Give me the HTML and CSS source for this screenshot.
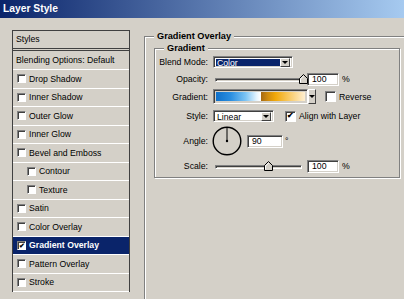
FILE: index.html
```html
<!DOCTYPE html>
<html lang="en">
<head>
    <meta charset="UTF-8">
    <meta name="viewport" content="width=device-width, initial-scale=1.0">
    <title>Layer Style</title>
    <link rel="stylesheet" href="styles.css">
</head>
<body>
    <div class="titlebar">Layer Style</div>

    <div class="main">
        <div class="style-list">
            <div class="list-head">Styles</div>
            <div class="list-row plain">Blending Options: Default</div>
            <div class="list-row"><span class="check"></span>Drop Shadow</div>
            <div class="list-row"><span class="check"></span>Inner Shadow</div>
            <div class="list-row"><span class="check"></span>Outer Glow</div>
            <div class="list-row"><span class="check"></span>Inner Glow</div>
            <div class="list-row"><span class="check"></span>Bevel and Emboss</div>
            <div class="list-row sub"><span class="check"></span>Contour</div>
            <div class="list-row sub"><span class="check"></span>Texture</div>
            <div class="list-row"><span class="check"></span>Satin</div>
            <div class="list-row"><span class="check"></span>Color Overlay</div>
            <div class="list-row active"><span class="check on">&#10004;</span>Gradient Overlay</div>
            <div class="list-row"><span class="check"></span>Pattern Overlay</div>
            <div class="list-row"><span class="check"></span>Stroke</div>
        </div>

        <fieldset class="group outer">
            <legend>Gradient Overlay</legend>
            <fieldset class="group inner">
                <legend>Gradient</legend>
                <div class="form">
                    <label>Blend Mode:</label>
                    <div class="ctl">
                        <div class="select blend"><span class="sel-text hl">Color</span><span class="drop"></span></div>
                    </div>

                    <label>Opacity:</label>
                    <div class="ctl">
                        <div class="slider">
                            <span class="track"></span>
                            <svg class="thumb" style="left: 86px" width="9" height="10" viewBox="0 0 9 10">
                                <polygon points="0.5,9.5 0.5,4.5 4.5,0.5 8.5,4.5 8.5,9.5" fill="#d4d0c8" stroke="#000"/>
                                <polyline points="1.5,8.5 1.5,5 4.5,2" fill="none" stroke="#fff"/>
                            </svg>
                        </div>
                        <span class="field">100</span><span class="unit">%</span>
                    </div>

                    <label>Gradient:</label>
                    <div class="ctl">
                        <div class="grad-pick"><span class="grad-bar"></span><span class="drop tall"></span></div>
                        <span class="check big"></span><span class="opt">Reverse</span>
                    </div>

                    <label>Style:</label>
                    <div class="ctl">
                        <div class="select style"><span class="sel-text">Linear</span><span class="drop"></span></div>
                        <span class="check big on">&#10004;</span><span class="opt">Align with Layer</span>
                    </div>

                    <label>Angle:</label>
                    <div class="ctl">
                        <svg class="dial" width="30" height="30" viewBox="0 0 30 30">
                            <circle cx="15" cy="15" r="13.8" fill="none" stroke="#000" stroke-width="1.4"/>
                            <line x1="15" y1="15" x2="15" y2="2" stroke="#000" stroke-width="1"/>
                            <circle cx="15" cy="15" r="1.2" fill="#000"/>
                        </svg>
                        <span class="field angle">90</span><span class="unit deg">&deg;</span>
                    </div>

                    <label>Scale:</label>
                    <div class="ctl">
                        <div class="slider">
                            <span class="track"></span>
                            <svg class="thumb" style="left: 51px" width="9" height="10" viewBox="0 0 9 10">
                                <polygon points="0.5,9.5 0.5,4.5 4.5,0.5 8.5,4.5 8.5,9.5" fill="#d4d0c8" stroke="#000"/>
                                <polyline points="1.5,8.5 1.5,5 4.5,2" fill="none" stroke="#fff"/>
                            </svg>
                        </div>
                        <span class="field">100</span><span class="unit">%</span>
                    </div>
                </div>
            </fieldset>
        </fieldset>
    </div>
</body>
</html>
```

FILE: styles.css
```css
* { box-sizing: border-box; }
body {
    margin: 0;
    height: 299px;
    overflow: hidden;
    background: #d4d0c8;
    font-family: "Liberation Sans", Arial, sans-serif;
    font-size: 8.7px;
    color: #000;
}

.titlebar {
    height: 18px;
    padding-left: 3px;
    line-height: 18px;
    background: linear-gradient(to right, #0a246a, #a6caf0);
    color: #fff;
    font-weight: bold;
    font-size: 10.3px;
}

.main {
    display: flex;
    align-items: flex-start;
    height: 281px;
    overflow: hidden;
}

/* styles list on the left */
.style-list {
    flex-shrink: 0;
    width: 118px;
    margin: 12px 0 0 12px;
    border: 1px solid #404040;
    border-bottom: none;
}
.list-head {
    height: 20px;
    line-height: 17px;
    padding-left: 3px;
    border-bottom: 3px double #404040;
}
.list-row {
    display: flex;
    align-items: center;
    height: 18.5px;
    padding-left: 4px;
    border-bottom: 1px solid #fff;
    white-space: nowrap;
}
.list-row.plain {
    height: 19px;
    padding-left: 3px;
}
.list-row.sub { padding-left: 14px; }
.list-row.active {
    background: #0a246a;
    color: #fff;
    font-weight: bold;
}

.check {
    display: flex;
    flex-shrink: 0;
    align-items: center;
    justify-content: center;
    width: 9px;
    height: 9px;
    margin-right: 3px;
    background: #fff;
    border: 1px solid;
    border-color: #808080 #fff #fff #808080;
    box-shadow: inset 1px 1px #404040;
    color: #000;
    font-size: 7px;
    font-weight: bold;
    line-height: 1;
}
.check.big {
    width: 11px;
    height: 11px;
    font-size: 8px;
}

/* fieldsets */
.group {
    margin: 0;
    min-width: 0;
    border: 1px solid #808080;
    box-shadow: inset 1px 1px #fff, 1px 1px #fff;
}
.group legend {
    padding: 0 3px;
    background: #d4d0c8;
    font-weight: bold;
    font-size: 9.2px;
    line-height: 11px;
}
.outer {
    flex: 0 0 270px;
    height: 300px;
    margin: 13px 0 0 14px;
    padding: 0 0 0 9px;
}
.inner {
    width: 246px;
    margin-top: 1px;
    padding: 0;
}
.inner legend { margin-left: 9px; }

.form {
    display: grid;
    grid-template-columns: 53px auto;
    grid-template-rows: 16px 18px 17px 22px 28px 22px;
    column-gap: 5px;
    align-items: center;
}
.form label {
    text-align: right;
    white-space: nowrap;
}
.ctl {
    display: flex;
    align-items: center;
    white-space: nowrap;
}

/* sunken controls */
.select, .field, .grad-bar {
    background: #fff;
    border: 1px solid;
    border-color: #808080 #fff #fff #808080;
    box-shadow: inset 1px 1px #404040, inset -1px -1px #d4d0c8;
}
.select {
    display: flex;
    align-items: center;
    height: 12px;
    padding: 2px 2px 1px 2px;
}
.select.blend { width: 80px; }
.select.style { width: 61px; }
.sel-text {
    flex: 1;
    height: 100%;
    line-height: 9px;
    padding-left: 1px;
}
.sel-text.hl {
    flex: 0 0 64px;
    background: #0a246a;
    color: #fff;
}
.drop {
    display: flex;
    align-items: center;
    justify-content: center;
    width: 10px;
    height: 9px;
    margin-left: auto;
    background: #d4d0c8;
    border: 1px solid;
    border-color: #fff #404040 #404040 #fff;
}
.drop::after {
    content: "";
    border-top: 3px solid #000;
    border-left: 3px solid transparent;
    border-right: 3px solid transparent;
}
.drop.tall {
    width: 8px;
    height: 15px;
}

.field {
    height: 13px;
    width: 32px;
    padding-left: 4px;
    line-height: 11px;
}
.field.angle { width: 36px; }
.unit { margin-left: 3px; }
.unit.deg { margin-left: 2px; }

/* sliders */
.slider {
    position: relative;
    width: 94px;
    height: 12px;
}
.track {
    position: absolute;
    left: 2px;
    right: 5px;
    top: 5px;
    height: 4px;
    border: 1px solid;
    border-color: #808080 #fff #fff #808080;
    box-shadow: inset 1px 1px #404040;
    background: #d4d0c8;
}
.thumb {
    position: absolute;
    top: 1px;
}

/* gradient picker */
.grad-pick {
    display: flex;
    height: 15px;
}
.grad-bar {
    width: 95px;
    height: 15px;
    background:
        linear-gradient(to right,
            #0b6cc6 0%, #2a8ee0 18%, #7cc4f4 34%, #e6f5ff 46%, #ffffff 50%,
            #a86c14 51%, #d08c10 58%, #f0a80a 66%, #f8c860 80%, #fff4e0 100%);
    background-clip: content-box;
    padding: 2px;
}
.grad-pick + .check.big { margin-left: 9px; }
.select.style + .check.big { margin-left: 11px; }

.dial {
    display: block;
    margin-left: -1px;
}
.dial + .field { margin-left: 5px; }
```
